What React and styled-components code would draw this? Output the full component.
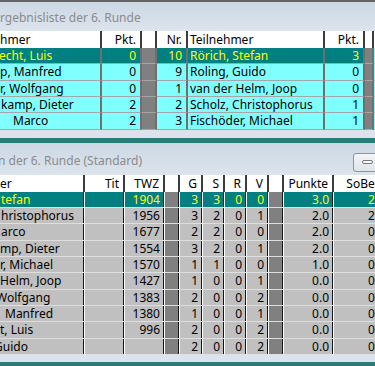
import styled, { createGlobalStyle, css } from 'styled-components';

const GlobalStyle = createGlobalStyle`
  html, body {
    margin: 0;
    padding: 0;
  }
  body {
    width: 375px;
    height: 366px;
    overflow: hidden;
    background: #2b7b78;
    font-family: "Noto Sans", "Open Sans", sans-serif;
    font-size: 12px;
  }
`;

const TOP_COLS = '102px 40px 15px 31px 137px 40px 9px 1fr';
const BOTTOM_COLS = '85px 40px 40px 15px 23px 22px 22px 22px 15px 50px 59px';
const ROW_H = '16.333px';

const tones = {
  cyan: css`background: #80ffff; color: #000;`,
  teal: css`background: #008080; color: #ffff00;`,
  silver: css`background: #c0c0c0; color: #000;`,
  strip: css`background: #808080; color: #000;`,
};

const Desktop = styled.div`
  display: flex;
  flex-direction: column;
  gap: 5px;
  width: 375px;
  height: 366px;
  overflow: hidden;
`;

const Window = styled.section`
  display: flex;
  flex-direction: column;
  flex-shrink: 0;
  background: #dbe3ec;
  padding-bottom: ${p => p.$foot}px;
  border-top: ${p => (p.$edge ? '2px solid #646464' : 'none')};
  overflow: hidden;
`;

const TitleBar = styled.header`
  height: ${p => p.$h}px;
  display: flex;
  align-items: flex-end;
  justify-content: space-between;
  background: linear-gradient(#cdd8e4, #dce4ed);
  color: #8b8b8b;
  white-space: nowrap;
  overflow: hidden;
`;

const Title = styled.span`
  line-height: 16px;
  margin-left: ${p => p.$shift}px;
  margin-bottom: ${p => p.$mb}px;
`;

const MinButton = styled.button`
  width: 26px;
  height: 19px;
  margin: 0 -4px 3px 0;
  padding: 0 0 0 8px;
  display: flex;
  align-items: center;
  border: 1px solid #8d949d;
  border-radius: 3px;
  background: linear-gradient(#f3f5f7, #dfe4ea);
`;

const MinGlyph = styled.span`
  width: 11px;
  height: 4px;
  box-sizing: border-box;
  border: 1px solid #777;
  border-radius: 2px;
  background: #fff;
`;

const Table = styled.div`
  display: flex;
  flex-direction: column;
  width: max-content;
`;

const Row = styled.div`
  display: grid;
  grid-template-columns: ${p => p.$cols};
  height: ${p => p.$h};
`;

const cellBase = css`
  box-sizing: border-box;
  overflow: hidden;
  white-space: nowrap;
  line-height: 16px;
  padding: 0 ${p => p.$pad ?? 4}px 0 2px;
  text-align: ${p => p.$align || 'left'};
  text-indent: ${p => p.$shift || 0}px;
`;

const Head = styled.div`
  ${cellBase};
  padding-top: 1px;
  background: #fff;
  color: #000;
  border-right: 2px solid #3c3c3c;
`;

const ListCell = styled.div`
  ${cellBase};
  ${p => tones[p.$tone]};
  border-right: 2px solid #6f6f6f;
  border-bottom: 1px solid #a6a6a6;
`;

const GridCell = styled.div`
  ${cellBase};
  ${p => tones[p.$tone]};
  border-right: 1px solid #fff;
  box-shadow: inset -1px 0 #161616;
  border-bottom: 1px solid #dedede;
`;

const pairings = [
  { white: 'echt, Luis', shift: -3, wp: 0, nr: 10, black: 'Rörich, Stefan', bp: 3, sel: true },
  { white: 'p, Manfred', shift: -2, wp: 0, nr: 9, black: 'Roling, Guido', bp: 0 },
  { white: 'r, Wolfgang', shift: -2, wp: 0, nr: 1, black: 'van der Helm, Joop', bp: 0 },
  { white: 'kamp, Dieter', shift: -1, wp: 2, nr: 2, black: 'Scholz, Christophorus', bp: 1 },
  { white: 'Marco', shift: 11, wp: 2, nr: 3, black: 'Fischöder, Michael', bp: 1 },
];

const standings = [
  { name: 'tefan', shift: -1, twz: '1904', g: 3, s: 3, r: 0, v: 0, pts: '3.0', sb: '2.0', sel: true },
  { name: 'hristophorus', shift: -1, twz: '1956', g: 3, s: 2, r: 0, v: 1, pts: '2.0', sb: '2.0' },
  { name: 'arco', shift: -1, twz: '1677', g: 2, s: 2, r: 0, v: 0, pts: '2.0', sb: '0.0' },
  { name: 'mp, Dieter', shift: -2, twz: '1554', g: 3, s: 2, r: 0, v: 1, pts: '2.0', sb: '0.0' },
  { name: 'r, Michael', shift: -2, twz: '1570', g: 1, s: 1, r: 0, v: 0, pts: '1.0', sb: '0.0' },
  { name: 'Helm, Joop', shift: -2, twz: '1427', g: 1, s: 0, r: 0, v: 1, pts: '0.0', sb: '0.0' },
  { name: 'Wolfgang', shift: -6, twz: '1383', g: 2, s: 0, r: 0, v: 2, pts: '0.0', sb: '0.0' },
  { name: 'Manfred', shift: 3, twz: '1380', g: 1, s: 0, r: 0, v: 1, pts: '0.0', sb: '0.0' },
  { name: 't, Luis', shift: -2, twz: '996', g: 2, s: 0, r: 0, v: 2, pts: '0.0', sb: '0.0' },
  { name: 'Guido', shift: -8, twz: '', g: 2, s: 0, r: 0, v: 2, pts: '0.0', sb: '0.0' },
];

function Pairings() {
  return (
    <Table>
      <Row $cols={TOP_COLS} $h="17px">
        <Head $shift={-2}>hmer</Head>
        <Head $align="right">Pkt.</Head>
        <Head />
        <Head $align="right">Nr.</Head>
        <Head>Teilnehmer</Head>
        <Head $align="right">Pkt.</Head>
        <Head />
        <Head />
      </Row>
      {pairings.map(p => {
        const tone = p.sel ? 'teal' : 'cyan';
        return (
          <Row key={p.nr} $cols={TOP_COLS} $h={ROW_H}>
            <ListCell $tone={tone} $shift={p.shift}>{p.white}</ListCell>
            <ListCell $tone={tone} $align="right">{p.wp}</ListCell>
            <ListCell $tone="strip" />
            <ListCell $tone={tone} $align="right">{p.nr}</ListCell>
            <ListCell $tone={tone}>{p.black}</ListCell>
            <ListCell $tone={tone} $align="right">{p.bp}</ListCell>
            <ListCell $tone="strip" />
            <ListCell $tone="cyan" />
          </Row>
        );
      })}
    </Table>
  );
}

function Standings() {
  return (
    <Table>
      <Row $cols={BOTTOM_COLS} $h="17px">
        <Head $shift={-2}>er</Head>
        <Head $align="right">Tit</Head>
        <Head $align="right">TWZ</Head>
        <Head />
        <Head $align="right">G</Head>
        <Head $align="right">S</Head>
        <Head $align="right">R</Head>
        <Head $align="right">V</Head>
        <Head />
        <Head $align="right">Punkte</Head>
        <Head $align="right">SoBerg</Head>
      </Row>
      {standings.map(p => {
        const tone = p.sel ? 'teal' : 'silver';
        return (
          <Row key={p.name} $cols={BOTTOM_COLS} $h={ROW_H}>
            <GridCell $tone={tone} $shift={p.shift}>{p.name}</GridCell>
            <GridCell $tone={tone} />
            <GridCell $tone={tone} $align="right">{p.twz}</GridCell>
            <GridCell $tone="strip" />
            <GridCell $tone={tone} $align="right">{p.g}</GridCell>
            <GridCell $tone={tone} $align="right">{p.s}</GridCell>
            <GridCell $tone={tone} $align="right">{p.r}</GridCell>
            <GridCell $tone={tone} $align="right">{p.v}</GridCell>
            <GridCell $tone="strip" />
            <GridCell $tone={tone} $align="right">{p.pts}</GridCell>
            <GridCell $tone={tone} $align="right" $pad={7}>{p.sb}</GridCell>
          </Row>
        );
      })}
    </Table>
  );
}

export default function App() {
  return (
    <>
      <GlobalStyle />
      <Desktop>
        <Window $edge $foot={8}>
          <TitleBar $h={29}>
            <Title $shift={0} $mb={5}>rgebnisliste der 6. Runde</Title>
          </TitleBar>
          <Pairings />
        </Window>
        <Window $foot={7}>
          <TitleBar $h={32}>
            <Title $shift={-2} $mb={6}>n der 6. Runde (Standard)</Title>
            <MinButton aria-label="Minimieren">
              <MinGlyph />
            </MinButton>
          </TitleBar>
          <Standings />
        </Window>
      </Desktop>
    </>
  );
}
